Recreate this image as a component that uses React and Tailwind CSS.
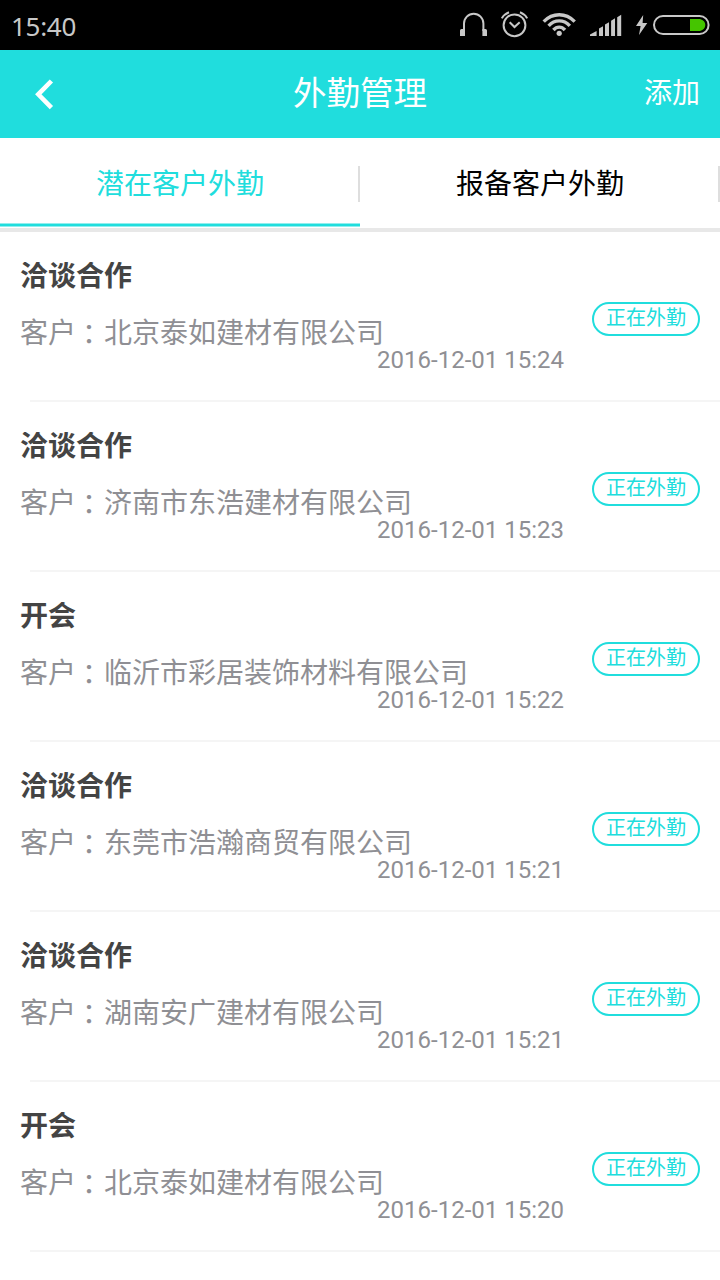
import React, { useState } from 'react';

const TABS = [
    { id: 'potential', name: '潜在客户外勤' },
    { id: 'reported', name: '报备客户外勤' },
];

const VISITS = [
    { id: 1, type: '洽谈合作', customer: '北京泰如建材有限公司', time: '2016-12-01 15:24' },
    { id: 2, type: '洽谈合作', customer: '济南市东浩建材有限公司', time: '2016-12-01 15:23' },
    { id: 3, type: '开会', customer: '临沂市彩居装饰材料有限公司', time: '2016-12-01 15:22' },
    { id: 4, type: '洽谈合作', customer: '东莞市浩瀚商贸有限公司', time: '2016-12-01 15:21' },
    { id: 5, type: '洽谈合作', customer: '湖南安广建材有限公司', time: '2016-12-01 15:21' },
    { id: 6, type: '开会', customer: '北京泰如建材有限公司', time: '2016-12-01 15:20' },
];

const StatusBar = () => (
    <div className="flex h-[50px] items-center justify-between bg-black pl-[11px] pr-[10px] text-[#c8c8c8]">
        <span className="pt-[1px] font-['Noto_Sans',sans-serif] text-[26px] leading-none tracking-[-0.3px]">15:40</span>
        <div className="flex items-center">
            {/* Headphones */}
            <svg className="mr-[13px] h-[50px] w-[28px]" viewBox="0 0 28 50" fill="none">
                <path d="M4 31V23.5A9.7 9.7 0 0 1 23.4 23.5V31" stroke="currentColor" strokeWidth="2" />
                <path d="M0 30.5Q0 29 1.5 29H5V36H0ZM27 30.5Q27 29 25.5 29H22.4V36H27Z" fill="currentColor" />
            </svg>
            {/* Alarm */}
            <svg className="mr-[13px] h-[50px] w-[28px]" viewBox="0 0 28 50" fill="none" stroke="currentColor" strokeWidth="2">
                <circle cx="13.5" cy="25.3" r="10.9" />
                <path d="M8.7 22.2L13.5 27L18.7 22.2" />
                <path d="M0.8 18.4Q3 14.3 8 12.3M26.2 18.4Q24 14.3 19 12.3" />
            </svg>
            {/* Wifi */}
            <svg className="mr-[14px] h-[50px] w-[34px]" viewBox="0 0 34 50" fill="none" stroke="currentColor" strokeWidth="3.4">
                <path d="M1.7 21.6Q8.5 14.7 17.2 14.7T32.7 21.6" />
                <path d="M6.6 25.8Q11.2 20.9 17.2 20.9T27.8 25.8" />
                <path d="M11.4 30Q14 27.1 17.2 27.1T23 30" />
                <circle cx="17.2" cy="33.3" r="2.6" fill="currentColor" stroke="none" />
            </svg>
            {/* Signal */}
            <svg className="mr-[14px] h-[50px] w-[32px]" viewBox="0 0 32 50" fill="currentColor">
                <path d="M0 36V34.5L6.6 31V36ZM9 36V28.5L13 26.3V36ZM15 36V24.5L19 22.3V36ZM21.1 36V20.7L25 18.3V36ZM27.2 36V17.2L31.2 14.7V36Z" />
            </svg>
            {/* Charging battery */}
            <svg className="h-[50px] w-[74px]" viewBox="0 0 74 50">
                <path d="M7.2 15L0 26H4.6L3 35L11.3 23H6.6Z" fill="currentColor" />
                <rect x="18" y="16" width="54.6" height="18" rx="9" fill="none" stroke="currentColor" strokeWidth="2" />
                <path d="M54 19H64Q69.3 20.5 69.3 25T64 31H54Z" fill="#45c500" />
            </svg>
        </div>
    </div>
);

const Header = () => (
    <header className="grid h-[88px] grid-cols-3 items-center bg-[#20dddd] text-white">
        <button className="justify-self-start pl-[34px]">
            <svg className="h-[32px] w-[20px]" viewBox="0 0 20 32" fill="none" stroke="currentColor" strokeWidth="4.6">
                <path d="M17.4 3L4.3 16.3L17.4 29.6" />
            </svg>
        </button>
        <h1 className="justify-self-center pb-[7px] text-[33.5px] leading-none">外勤管理</h1>
        <button className="justify-self-end pb-[6px] pr-5 text-[28px] leading-none">添加</button>
    </header>
);

const VisitItem = ({ visit }) => (
    <li className="flex h-[170px] flex-col">
        <div className="flex h-[168px]">
            <div className="flex w-[564px] flex-col pl-5 pt-[30px]">
                {/* Line box is shorter than its glyphs, so the tops are cut off */}
                <h2 className="h-[30px] overflow-hidden text-[28px] font-bold leading-[24px] text-[#444]">{visit.type}</h2>
                <p className="mt-[26px] whitespace-nowrap text-[28px] leading-[27px] text-[#8f8f94]">
                    客户<span className="relative -left-px top-[2px] font-['Noto_Sans_CJK_TC',sans-serif]">：</span>{visit.customer}
                </p>
                <time className="mt-px self-end font-['Roboto',sans-serif] text-[24px] leading-[28px] text-[#8f8f94]">{visit.time}</time>
            </div>
            <span className="ml-7 mt-[70px] flex h-[34px] w-[108px] justify-center rounded-[17px] border-2 border-[#20dddd] text-[20px] leading-[26px] text-[#20dddd]">
                正在外勤
            </span>
        </div>
        <div className="ml-[30px] h-[2px] bg-[#f5f5f5]"></div>
    </li>
);

export default function App() {
    const [activeTab, setActiveTab] = useState('potential');

    return (
        <div className="h-[1280px] w-[720px] overflow-hidden bg-white font-['Noto_Sans_CJK_SC',sans-serif]">
            <StatusBar />
            <Header />
            <nav className="flex h-[94px] border-b-4 border-[#e8e8e8]">
                {TABS.map((tab) => {
                    const isActive = activeTab === tab.id;
                    return (
                        <button
                            key={tab.id}
                            onClick={() => setActiveTab(tab.id)}
                            className={`flex w-[360px] flex-col text-[28px] leading-none ${isActive ? 'text-[#20dddd]' : 'text-black'}`}
                        >
                            <span className="mt-7 flex h-9 w-full items-center justify-center border-r-2 border-[#dedede] pb-[5px] pl-[2px]">{tab.name}</span>
                            <span className={`mt-[21px] h-[4px] w-full ${isActive ? 'border-y border-[#90eeee] bg-[#20dddd]' : ''}`}></span>
                        </button>
                    );
                })}
            </nav>
            <ul>
                {VISITS.map((visit) => (
                    <VisitItem key={visit.id} visit={visit} />
                ))}
            </ul>
        </div>
    );
}
